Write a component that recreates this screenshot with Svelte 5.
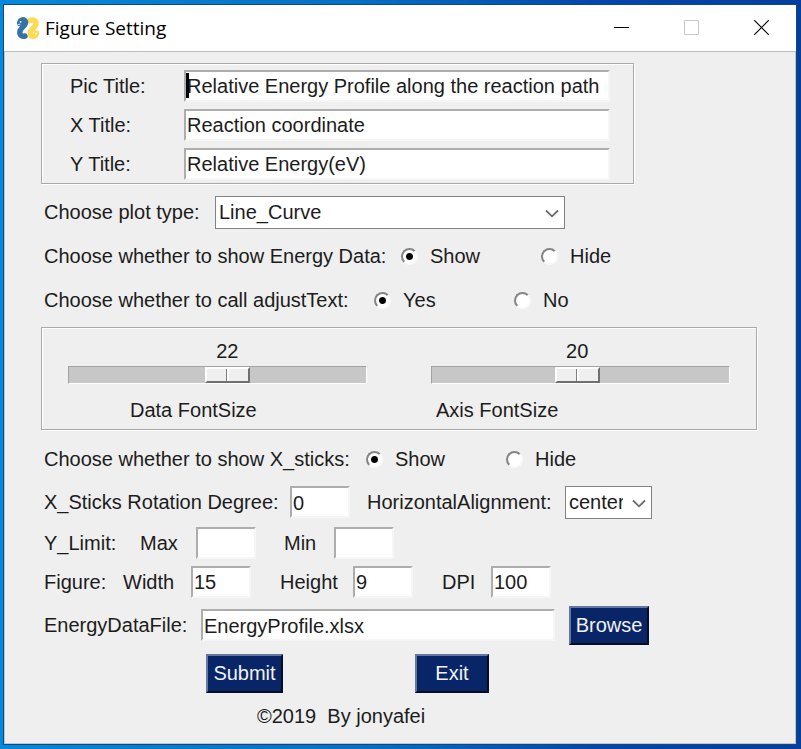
<script>
  let fields = $state([
    { id: 'pic-title', label: 'Pic Title:', value: 'Relative Energy Profile along the reaction path', caret: true },
    { id: 'x-title', label: 'X Title:', value: 'Reaction coordinate', caret: false },
    { id: 'y-title', label: 'Y Title:', value: 'Relative Energy(eV)', caret: false }
  ]);
  let sliders = $state([
    { id: 'data-font', label: 'Data FontSize', value: 22 },
    { id: 'axis-font', label: 'Axis FontSize', value: 20 }
  ]);
  let plotType = $state('Line_Curve');
  let align = $state('center');
  let energy = $state('Show');
  let adjust = $state('Yes');
  let sticks = $state('Show');
  let rotation = $state('0');
  let yMax = $state('');
  let yMin = $state('');
  let width = $state('15');
  let height = $state('9');
  let dpi = $state('100');
  let file = $state('EnergyProfile.xlsx');

  const MIN = 1;
  const MAX = 40;
  const columns = (v) => `${v - MIN}fr 45px ${MAX - v}fr`;
</script>

{#snippet chevron()}
  <svg class="chevron" viewBox="0 0 14 9" aria-hidden="true">
    <path d="M1 1.5 L7 7.3 L13 1.5" fill="none" stroke="#6a6a6a" stroke-width="1.8" />
  </svg>
{/snippet}

<div class="desktop">
  <main class="window">
    <header>
      <svg class="logo" viewBox="0 0 24 24" aria-hidden="true">
        <g fill="none" stroke-width="5.4" stroke-linecap="round" stroke-linejoin="round">
          <path
            d="M14 4.6 C17 3 20.4 4.6 20 8 C19.4 12 14.2 13.4 14.2 17.6 C14.2 21.4 19.4 21.4 20.6 17"
            stroke="#ffdb52"
          />
          <path
            d="M3.6 7.4 C4 3.4 8.8 2.4 9.6 5.8 C10.2 10 3.8 11.6 3.8 16.2 C3.8 19.6 6.4 20.6 9 20"
            stroke="#3572a5"
          />
        </g>
        <circle cx="4.6" cy="5.8" r=".9" fill="#fff" />
        <circle cx="20" cy="17.6" r=".9" fill="#fff" />
        <path d="M1.4 8.6 L4.4 8.2" stroke="#fff" stroke-width=".8" />
      </svg>
      <h1>Figure Setting</h1>
      <div class="controls">
        <button type="button" aria-label="Minimize">
          <svg viewBox="0 0 15 15"><path d="M0 7.5H15" stroke="#000" /></svg>
        </button>
        <button type="button" aria-label="Maximize" disabled>
          <svg viewBox="0 0 15 15"><path d="M.5 .5H14.5V14.5H.5Z" fill="none" stroke="#c8c8c8" /></svg>
        </button>
        <button type="button" aria-label="Close">
          <svg viewBox="0 0 15 15"><path d="M.3 .3L14.7 14.7M14.7 .3L.3 14.7" stroke="#000" stroke-width="1.2" /></svg>
        </button>
      </div>
    </header>

    <form onsubmit={(e) => e.preventDefault()}>
      <section class="frame titles">
        {#each fields as f (f.id)}
          <div class="field">
            <label for={f.id}>{f.label}</label>
            <div class="entry">
              <input type="text" id={f.id} bind:value={f.value} />
              {#if f.caret}<span class="caret"></span>{/if}
            </div>
          </div>
        {/each}
      </section>

      <div class="row plot">
        <label for="plot-type">Choose plot type:</label>
        <div class="combo">
          <select id="plot-type" bind:value={plotType}><option>Line_Curve</option></select>
          {@render chevron()}
        </div>
      </div>

      <div class="row energy" role="radiogroup" aria-labelledby="energy-label">
        <span id="energy-label">Choose whether to show Energy Data:</span>
        {#each ['Show', 'Hide'] as option}
          <label class="radio"><input type="radio" name="energy" value={option} bind:group={energy} />{option}</label>
        {/each}
      </div>

      <div class="row adjust" role="radiogroup" aria-labelledby="adjust-label">
        <span id="adjust-label">Choose whether to call adjustText:</span>
        {#each ['Yes', 'No'] as option}
          <label class="radio"><input type="radio" name="adjust" value={option} bind:group={adjust} />{option}</label>
        {/each}
      </div>

      <section class="frame sliders">
        {#each sliders as s (s.id)}
          <div class="slider">
            <div class="readout" style:grid-template-columns={columns(s.value)}>
              <output for={s.id}>{s.value}</output>
            </div>
            <input type="range" id={s.id} min={MIN} max={MAX} bind:value={s.value} />
            <label for={s.id} class={s.id}>{s.label}</label>
          </div>
        {/each}
      </section>

      <div class="row sticks" role="radiogroup" aria-labelledby="sticks-label">
        <span id="sticks-label">Choose whether to show X_sticks:</span>
        {#each ['Show', 'Hide'] as option}
          <label class="radio"><input type="radio" name="sticks" value={option} bind:group={sticks} />{option}</label>
        {/each}
      </div>

      <div class="row rotation">
        <label for="rotation">X_Sticks Rotation Degree:</label>
        <input type="text" id="rotation" bind:value={rotation} />
        <label for="align">HorizontalAlignment:</label>
        <div class="combo">
          <select id="align" bind:value={align}><option>center</option><option>left</option><option>right</option></select>
          {@render chevron()}
        </div>
      </div>

      <div class="row limit">
        <span>Y_Limit:</span>
        <label for="y-max">Max</label>
        <input type="text" id="y-max" bind:value={yMax} />
        <label for="y-min">Min</label>
        <input type="text" id="y-min" bind:value={yMin} />
      </div>

      <div class="row figure">
        <span>Figure:</span>
        <label for="fig-width">Width</label>
        <input type="text" id="fig-width" bind:value={width} />
        <label for="fig-height">Height</label>
        <input type="text" id="fig-height" bind:value={height} />
        <label for="fig-dpi">DPI</label>
        <input type="text" id="fig-dpi" bind:value={dpi} />
      </div>

      <div class="row file">
        <label for="data-file">EnergyDataFile:</label>
        <input type="text" id="data-file" bind:value={file} />
        <button type="button" class="push">Browse</button>
      </div>

      <div class="row actions">
        <button type="submit" class="push">Submit</button>
        <button type="button" class="push">Exit</button>
      </div>

      <footer>©2019&nbsp; By jonyafei</footer>
    </form>
  </main>
</div>

<style>
  :global(body) {
    margin: 0;
  }
  * {
    box-sizing: border-box;
  }
  .desktop {
    min-height: 100vh;
    padding: 5px 5px 5px 4px;
    display: flex;
    background: linear-gradient(90deg, #0589dc 0%, #0670c4 45%, #0346ad 75%, #033f9f 100%);
  }
  .window {
    flex: 1;
    min-width: 0;
    background: #efefef;
    box-shadow: 0 0 0 1px #14477c, inset 0 0 0 1px #c4c4c4;
    color: #1c1c1c;
    font: 20px/24px 'Liberation Sans', Arial, sans-serif;
  }
  header {
    display: flex;
    align-items: center;
    height: 47px;
    padding-left: 12px;
    background: #fff;
    border-bottom: 1px solid #bdbdbd;
  }
  .logo {
    width: 24px;
    height: 24px;
  }
  h1 {
    margin: 0 0 0 5px;
    font: 19px/24px 'Open Sans', 'Noto Sans', sans-serif;
    color: #000;
  }
  .controls {
    display: flex;
    margin-left: auto;
  }
  .controls button {
    display: grid;
    place-items: center;
    width: 70px;
    height: 46px;
    padding: 0 0 2px;
    border: 0;
    background: none;
  }
  .controls svg {
    width: 15px;
    height: 15px;
  }

  form {
    padding: 11px 37px 8px;
  }
  .frame {
    border: 1px solid #a9a9a9;
    box-shadow: 1px 1px #fff, inset 1px 1px #fff;
  }
  .titles {
    max-width: 593px;
    padding: 2px 23px 0 28px;
    margin-bottom: 6px;
  }
  .field {
    display: grid;
    grid-template-columns: 114px 1fr;
    align-items: center;
    height: 39px;
  }
  .entry,
  .combo {
    position: relative;
    display: flex;
  }
  .caret {
    position: absolute;
    left: 2px;
    top: 3px;
    width: 3px;
    height: 25px;
    background: #000;
  }
  input[type='text'] {
    width: 100%;
    min-width: 0;
    height: 32px;
    margin: 0;
    padding: 2px 1px 0;
    border: 2px solid;
    border-color: #adadad #f6f6f6 #f6f6f6 #adadad;
    border-radius: 0;
    background: #fff;
    color: inherit;
    font: inherit;
  }

  .row {
    display: grid;
    align-items: center;
    justify-content: start;
    height: 44px;
    padding-left: 3px;
    white-space: nowrap;
  }
  .plot {
    grid-template-columns: 171px 350px;
  }
  .energy {
    grid-template-columns: 357px 140px 140px;
  }
  .adjust {
    grid-template-columns: 330px 140px 140px;
  }
  .sticks {
    grid-template-columns: 322px 140px 140px;
  }
  .rotation {
    height: 42px;
    grid-template-columns: 246px 60px 17px 198px 87px;
  }
  .rotation label:nth-of-type(2) {
    grid-column: 4;
  }
  .limit {
    height: 39px;
    grid-template-columns: 96px 56px 60px 28px 50px 60px;
  }
  .limit label:nth-of-type(2) {
    grid-column: 5;
  }
  .figure {
    height: 39px;
    grid-template-columns: 79px 68px 60px 29px 73px 60px 29px 49px 60px;
  }
  .figure label:nth-of-type(2) {
    grid-column: 5;
  }
  .figure label:nth-of-type(3) {
    grid-column: 8;
  }
  .file {
    height: 48px;
    grid-template-columns: 157px 354px 80px;
  }
  .file button {
    margin-left: 14px;
    width: 80px;
  }
  .actions {
    height: 48px;
    padding-left: 165px;
    grid-template-columns: 77px 74px;
    column-gap: 132px;
  }

  select {
    appearance: none;
    width: 100%;
    height: 33px;
    margin: 0;
    padding: 0 28px 0 3px;
    border: 1px solid #828282;
    border-radius: 0;
    background: #fff;
    color: inherit;
    font: inherit;
  }
  .chevron {
    position: absolute;
    right: 6px;
    top: 13px;
    width: 14px;
    height: 9px;
    pointer-events: none;
  }

  .radio {
    display: flex;
    align-items: center;
    gap: 12px;
  }
  .radio input {
    appearance: none;
    width: 17px;
    height: 17px;
    margin: 0;
    border: 2px solid;
    border-color: #858585 #fafafa #fafafa #858585;
    border-radius: 50%;
    background: #fff;
  }
  .radio input:checked {
    background: radial-gradient(circle, #000 0 3px, #fff 4px);
  }

  .sliders {
    max-width: 716px;
    height: 103px;
    padding: 11px 26px 0;
    margin: 5px 0 7px;
    display: grid;
    grid-template-columns: 1fr 1fr;
    column-gap: 64px;
  }
  .slider {
    display: flex;
    flex-direction: column;
  }
  .readout {
    display: grid;
  }
  output {
    grid-column: 2;
    text-align: center;
  }
  .slider label {
    margin-top: 14px;
  }
  .data-font {
    padding-left: 62px;
  }
  .axis-font {
    padding-left: 5px;
  }
  input[type='range'] {
    appearance: none;
    width: 100%;
    height: 18px;
    margin: 3px 0 0;
    border: 1px solid;
    border-color: #a3a3a3 #fff #fff #a3a3a3;
    background: #c7c7c7;
  }
  input[type='range']::-webkit-slider-thumb {
    appearance: none;
    width: 45px;
    height: 16px;
    border: 2px solid;
    border-color: #fff #707070 #707070 #fff;
    background: linear-gradient(90deg, #efefef 19px, #808080 19px 20px, #fff 20px 22px, #efefef 22px);
  }

  .push {
    height: 39px;
    padding: 0;
    border: 2px solid;
    border-color: #66789c #040d24 #040d24 #66789c;
    border-radius: 0;
    background: #082567;
    color: #f2f2f2;
    font: inherit;
  }
  footer {
    padding: 7px 0 0 216px;
  }
</style>
